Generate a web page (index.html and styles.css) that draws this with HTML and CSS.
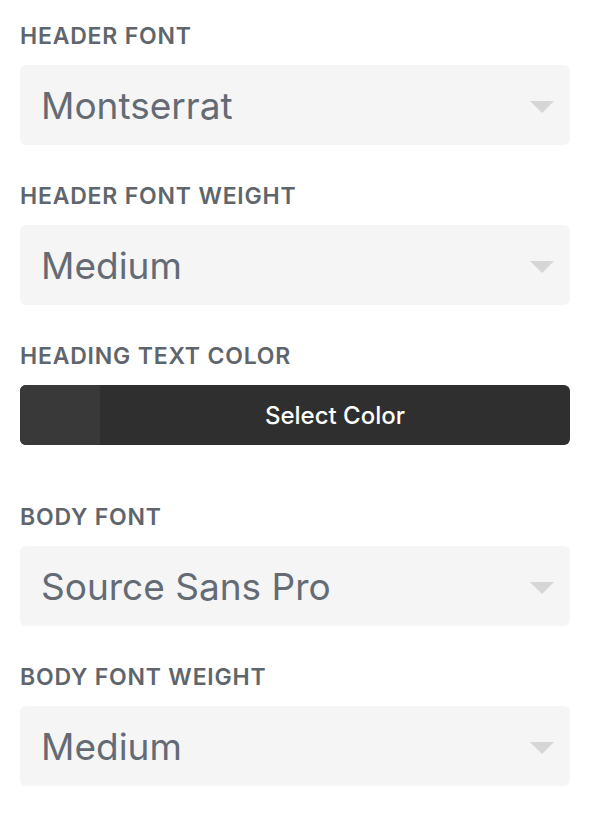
FILE: index.html
```html
<!DOCTYPE html>
<html>
<head>
<meta charset="utf-8">
<link rel="stylesheet" href="styles.css">
</head>
<body>
<div class="panel">
  <div class="field">
    <div class="label">HEADER FONT</div>
    <div class="select"><span class="value">Montserrat</span><span class="caret"></span></div>
  </div>
  <div class="field">
    <div class="label">HEADER FONT WEIGHT</div>
    <div class="select"><span class="value">Medium</span><span class="caret"></span></div>
  </div>
  <div class="field field-color">
    <div class="label">HEADING TEXT COLOR</div>
    <div class="color-btn"><span class="swatch"></span><span class="color-text">Select Color</span></div>
  </div>
  <div class="field">
    <div class="label">BODY FONT</div>
    <div class="select"><span class="value">Source Sans Pro</span><span class="caret"></span></div>
  </div>
  <div class="field">
    <div class="label">BODY FONT WEIGHT</div>
    <div class="select"><span class="value">Medium</span><span class="caret"></span></div>
  </div>
</div>
</body>
</html>
```
FILE: styles.css
```css
html, body {
  margin: 0;
  padding: 0;
  background: #ffffff;
}
.panel {
  padding: 23px 24px 0 20px;
  display: flex;
  flex-direction: column;
  gap: 38px;
  font-family: Inter, "Liberation Sans", sans-serif;
}
.field {
  display: flex;
  flex-direction: column;
}
.field-color {
  margin-bottom: 21px;
}
.label {
  font-size: 23px;
  line-height: 27px;
  font-weight: 600;
  letter-spacing: 0.8px;
  color: #5f656d;
  margin-bottom: 15px;
}
.select {
  height: 80px;
  background: #f5f5f5;
  border-radius: 6px;
  display: flex;
  align-items: center;
  justify-content: space-between;
  padding: 0 16px 0 21px;
}
.value {
  font-size: 37px;
  line-height: 37px;
  color: #646b74;
}
.caret {
  width: 0;
  height: 0;
  border-left: 12px solid transparent;
  border-right: 12px solid transparent;
  border-top: 12px solid #d6d6d6;
  margin-top: 4px;
}
.color-btn {
  height: 60px;
  background: #2f2f2f;
  border-radius: 6px;
  display: flex;
  overflow: hidden;
}
.swatch {
  width: 80px;
  background: #393939;
}
.color-text {
  flex: 1;
  display: flex;
  align-items: center;
  justify-content: center;
  color: #ffffff;
  font-size: 24px;
  font-weight: 500;
}
```
